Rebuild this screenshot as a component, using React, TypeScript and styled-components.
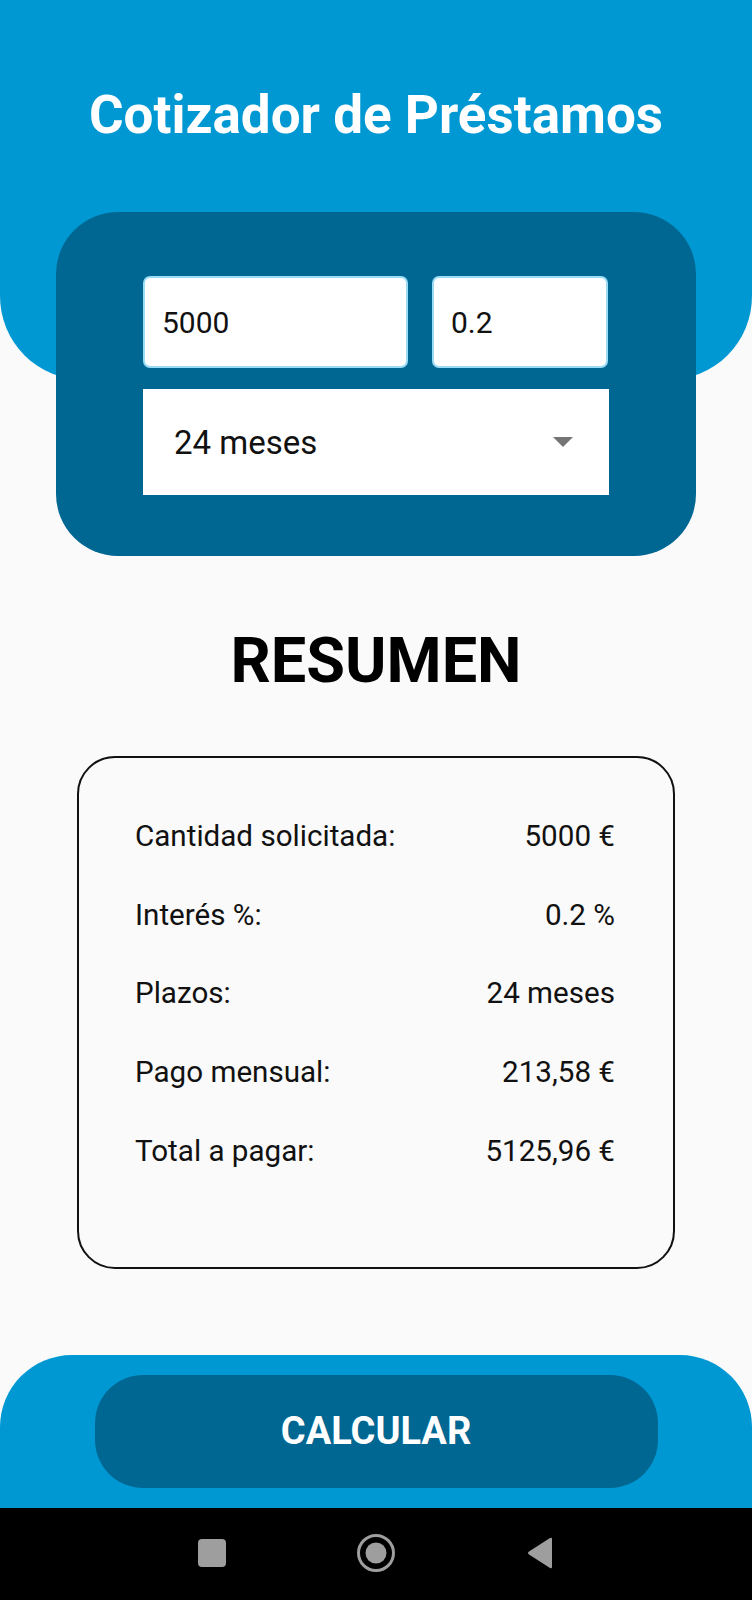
import React from "react";
import styled, { createGlobalStyle } from "styled-components";

const GlobalStyle = createGlobalStyle`
  html, body { margin: 0; padding: 0; background: #fafafa; }
  body { font-family: Roboto, "Noto Sans", sans-serif; }
  * { box-sizing: border-box; }
`;

const Page = styled.div`
  width: 752px;
  height: 1600px;
  display: flex;
  flex-direction: column;
  align-items: center;
  background: #fafafa;
  overflow: hidden;
`;

const Header = styled.header`
  align-self: stretch;
  height: 380px;
  background: #0098d3;
  border-radius: 0 0 84px 84px;
  display: flex;
  justify-content: center;
  padding-top: 82px;
`;

const Title = styled.h1`
  margin: 0;
  height: 66px;
  line-height: 66px;
  font-family: Roboto, sans-serif;
  font-weight: 700;
  font-size: 53px;
  color: #ffffff;
`;

const FormCard = styled.section`
  width: 640px;
  margin-top: -168px;
  background: #006793;
  border-radius: 62px;
  padding: 64px 87px 61px;
  display: flex;
  flex-direction: column;
  gap: 21px;
`;

const InputRow = styled.div`
  display: flex;
  gap: 24px;
`;

const Field = styled.div<{ $width: number }>`
  width: ${(p) => p.$width}px;
  height: 92px;
  background: #ffffff;
  border: 2px solid #9adcf5;
  border-radius: 7px;
  display: flex;
  align-items: center;
  padding-left: 17px;
  font-size: 30px;
  color: #111;
`;

const Select = styled.div`
  height: 106px;
  background: #ffffff;
  display: flex;
  align-items: center;
  justify-content: space-between;
  padding: 0 36px 0 31px;
  font-size: 33px;
  color: #111;
`;

const Caret = styled.span`
  width: 0;
  height: 0;
  border-left: 10px solid transparent;
  border-right: 10px solid transparent;
  border-top: 10px solid #757575;
`;

const SectionTitle = styled.h2`
  margin: 68px 0 0;
  height: 74px;
  line-height: 74px;
  font-weight: 700;
  font-size: 63px;
  color: #000;
`;

const SummaryCard = styled.section`
  width: 598px;
  margin-top: 58px;
  border: 2px solid #111;
  border-radius: 38px;
  padding: 39px 58px 77px 56px;
  display: flex;
  flex-direction: column;
`;

const SummaryRow = styled.div`
  height: 78.6px;
  display: flex;
  align-items: center;
  justify-content: space-between;
  font-size: 29.6px;
  color: #111;
`;

const Footer = styled.footer`
  align-self: stretch;
  margin-top: 86px;
  height: 153px;
  background: #0098d3;
  border-radius: 72px 72px 0 0;
  display: flex;
  justify-content: center;
  padding-top: 20px;
`;

const CalcButton = styled.button`
  width: 563px;
  height: 113px;
  border: none;
  border-radius: 48px;
  background: #006793;
  color: #fff;
  font-family: Roboto, sans-serif;
  font-weight: 700;
  font-size: 38px;
  cursor: pointer;
`;

const NavBar = styled.nav`
  align-self: stretch;
  flex: 1;
  background: #000;
  display: flex;
  align-items: center;
  justify-content: center;
  padding-bottom: 2px;
`;

const NavSlot = styled.div`
  width: 164px;
  display: flex;
  justify-content: center;
`;

const rows: [string, string][] = [
  ["Cantidad solicitada:", "5000 €"],
  ["Interés %:", "0.2 %"],
  ["Plazos:", "24 meses"],
  ["Pago mensual:", "213,58 €"],
  ["Total a pagar:", "5125,96 €"],
];

export default function App() {
  return (
    <>
      <GlobalStyle />
      <Page>
        <Header>
          <Title>Cotizador de Préstamos</Title>
        </Header>
        <FormCard>
          <InputRow>
            <Field $width={265}>5000</Field>
            <Field $width={176}>0.2</Field>
          </InputRow>
          <Select>
            <span>24 meses</span>
            <Caret />
          </Select>
        </FormCard>
        <SectionTitle>RESUMEN</SectionTitle>
        <SummaryCard>
          {rows.map(([label, value]) => (
            <SummaryRow key={label}>
              <span>{label}</span>
              <span>{value}</span>
            </SummaryRow>
          ))}
        </SummaryCard>
        <Footer>
          <CalcButton>CALCULAR</CalcButton>
        </Footer>
        <NavBar>
          <NavSlot>
            <svg width="28" height="28" viewBox="0 0 28 28">
              <rect x="0" y="0" width="28" height="28" rx="4" fill="#9e9e9e" />
            </svg>
          </NavSlot>
          <NavSlot>
            <svg width="40" height="40" viewBox="0 0 40 40">
              <circle cx="20" cy="20" r="17.5" fill="none" stroke="#9e9e9e" strokeWidth="3" />
              <circle cx="20" cy="20" r="10.5" fill="#9e9e9e" />
            </svg>
          </NavSlot>
          <NavSlot>
            <svg width="28" height="32" viewBox="0 0 28 32">
              <path d="M26 2 L26 30 Q26 32 24 31 L3 17.5 Q1 16 3 14.5 L24 1 Q26 0 26 2 Z" fill="#9e9e9e" />
            </svg>
          </NavSlot>
        </NavBar>
      </Page>
    </>
  );
}
